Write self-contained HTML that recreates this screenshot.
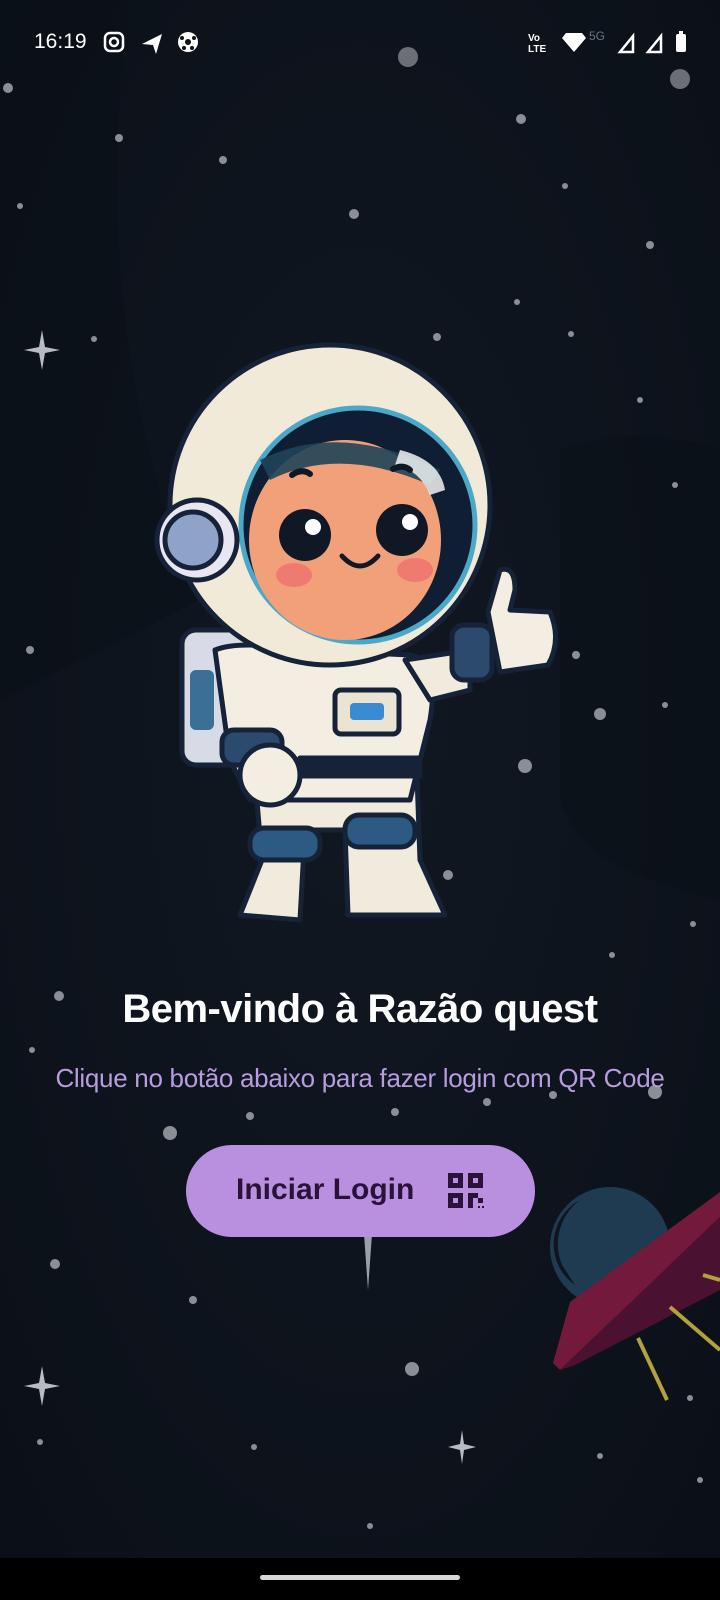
<!DOCTYPE html>
<html><head><meta charset="utf-8">
<style>
html,body{margin:0;padding:0}
body{width:720px;height:1600px;overflow:hidden;background:#0d131b;position:relative;font-family:"Liberation Sans",sans-serif}
.abs{position:absolute}
.title{left:0;width:720px;top:987px;text-align:center;color:#fff;font-weight:bold;font-size:40px;letter-spacing:-0.5px}
.sub{left:0;width:720px;top:1063px;text-align:center;color:#b99be0;font-size:26px;letter-spacing:-0.3px}
.btn{left:186px;top:1145px;width:349px;height:92px;border-radius:46px;background:#b990e0}
.btn span{position:absolute;left:50px;top:28px;font-size:30px;font-weight:bold;color:#2a1238}
</style></head><body>
<svg class="abs" style="left:0;top:0" width="720" height="1600" viewBox="0 0 720 1600">
<defs>
<radialGradient id="bg" cx="0.5" cy="0.45" r="0.7"><stop offset="0" stop-color="#111822"/><stop offset="1" stop-color="#0b1018"/></radialGradient>
</defs>
<rect width="720" height="1600" fill="url(#bg)"/>
<path d="M130 0 C100 200 120 420 200 600 L0 700 L0 0Z" fill="#0a0f16" opacity="0.5"/>
<path d="M560 450 C640 420 720 450 720 450 L720 900 C640 880 580 860 560 800Z" fill="#0a0f16" opacity="0.5"/>
<g fill="#8a8f96">
<circle cx="408" cy="57" r="10" fill="#6c7076"/><circle cx="680" cy="79" r="10" fill="#6c7076"/><circle cx="8" cy="88" r="5"/>
<circle cx="119" cy="138" r="4"/><circle cx="223" cy="160" r="4"/><circle cx="354" cy="214" r="5"/><circle cx="521" cy="119" r="5"/>
<circle cx="565" cy="186" r="3"/><circle cx="650" cy="245" r="4"/><circle cx="20" cy="206" r="3"/><circle cx="437" cy="337" r="4"/>
<circle cx="517" cy="302" r="3"/><circle cx="571" cy="334" r="3"/><circle cx="640" cy="400" r="3"/><circle cx="94" cy="339" r="3"/>
<circle cx="675" cy="485" r="3"/><circle cx="30" cy="650" r="4"/><circle cx="576" cy="655" r="4"/><circle cx="600" cy="714" r="6"/>
<circle cx="525" cy="766" r="7"/><circle cx="665" cy="705" r="3"/><circle cx="448" cy="875" r="5"/><circle cx="612" cy="955" r="3"/>
<circle cx="693" cy="924" r="3"/><circle cx="59" cy="996" r="5"/><circle cx="32" cy="1050" r="3"/><circle cx="170" cy="1133" r="7"/>
<circle cx="250" cy="1116" r="4"/><circle cx="395" cy="1112" r="4"/><circle cx="487" cy="1102" r="4"/><circle cx="553" cy="1095" r="4"/>
<circle cx="655" cy="1092" r="7"/><circle cx="55" cy="1264" r="5"/><circle cx="193" cy="1300" r="4"/><circle cx="412" cy="1369" r="7"/>
<circle cx="600" cy="1456" r="3"/><circle cx="370" cy="1526" r="3"/><circle cx="40" cy="1442" r="3"/><circle cx="690" cy="1398" r="3"/>
<circle cx="700" cy="1480" r="3"/><circle cx="254" cy="1447" r="3"/>
</g>
<g fill="#b8bcc2">
<path d="M42 330 L45 347 L60 350 L45 353 L42 370 L39 353 L24 350 L39 347Z"/>
<path d="M42 1366 L45 1383 L60 1386 L45 1389 L42 1406 L39 1389 L24 1386 L39 1383Z"/>
<path d="M462 1430 L464 1444 L476 1447 L464 1450 L462 1464 L460 1450 L448 1447 L460 1444Z"/>
<path d="M368 1200 L372 1234 L368 1290 L364 1234Z" fill="#9aa0a8"/>
</g>
<!-- UFO -->
<circle cx="610" cy="1247" r="60" fill="#1e3b52"/>
<path d="M562 1265 A55 55 0 0 1 580 1200 A50 50 0 0 0 575 1285Z" fill="#0d1520"/>
<path d="M553 1363 L570 1302 L720 1192 L720 1217 L560 1370Z" fill="#72193c"/>
<path d="M560 1370 L720 1217 L720 1290 L575 1365Z" fill="#4a1230"/>
<g stroke="#b5a040" stroke-width="4"><line x1="670" y1="1307" x2="720" y2="1350"/><line x1="638" y1="1338" x2="667" y2="1400"/><line x1="703" y1="1275" x2="720" y2="1280"/></g>
<!-- astronaut -->
<g stroke="#152238" stroke-width="5" stroke-linejoin="round">
<rect x="182" y="630" width="70" height="135" rx="14" fill="#d7dbe6"/>
<rect x="190" y="670" width="24" height="60" rx="6" fill="#3b6f96" stroke="none"/>
<path d="M250 720 L262 860 L240 915 L300 920 L305 830 L345 830 L348 915 L445 915 L420 860 L415 720Z" fill="#f1ebde"/>
<path d="M215 650 Q240 640 300 650 L410 655 Q440 660 430 720 L410 800 L250 800 L230 760Z" fill="#f4eee2"/>
<path d="M405 660 L470 650 L470 690 L430 700Z" fill="#f1ebde"/>
<rect x="452" y="625" width="40" height="55" rx="12" fill="#2c4a6e"/>
<path d="M488 612 L500 570 Q515 565 515 590 L510 610 L550 612 Q562 640 548 665 L500 672 Z" fill="#f4eee2"/>
<rect x="222" y="730" width="60" height="35" rx="12" fill="#2c4a6e"/>
<circle cx="270" cy="775" r="30" fill="#f4eee2"/>
<rect x="250" y="828" width="70" height="32" rx="14" fill="#2c5a82"/>
<rect x="345" y="815" width="70" height="32" rx="14" fill="#2c5a82"/>
<rect x="335" y="690" width="64" height="44" rx="6" fill="#ece4d2"/>
<rect x="350" y="703" width="34" height="17" rx="4" fill="#3b8bd0" stroke="none"/>
<rect x="300" y="758" width="120" height="18" fill="#152238"/>
<circle cx="330" cy="505" r="160" fill="#f2ead8"/>
<circle cx="358" cy="525" r="117" fill="#0f1e33" stroke="#4aa8c8"/>
<ellipse cx="345" cy="540" rx="96" ry="100" fill="#f2a07a" stroke="none"/>
<circle cx="197" cy="540" r="40" fill="#e8e6f0"/>
<circle cx="193" cy="540" r="28" fill="#8fa2c8"/>
</g>
<path d="M260 460 Q340 420 440 470 L430 485 Q340 445 270 480Z" fill="#1f4458" opacity="0.9"/>
<path d="M400 450 Q440 460 445 490 L430 495 Q420 470 395 465Z" fill="#fff" opacity="0.8"/>
<circle cx="305" cy="535" r="26" fill="#101826"/><circle cx="402" cy="530" r="26" fill="#101826"/>
<circle cx="313" cy="527" r="8" fill="#fff"/><circle cx="410" cy="522" r="8" fill="#fff"/>
<ellipse cx="294" cy="575" rx="18" ry="12" fill="#ee7070" opacity="0.8"/><ellipse cx="415" cy="570" rx="18" ry="12" fill="#ee7070" opacity="0.8"/>
<path d="M342 556 Q360 576 378 556" stroke="#101826" stroke-width="5" fill="none" stroke-linecap="round"/>
<path d="M292 475 Q302 468 310 474" stroke="#101826" stroke-width="6" fill="none" stroke-linecap="round"/>
<path d="M393 469 Q403 464 410 470" stroke="#101826" stroke-width="6" fill="none" stroke-linecap="round"/>
<rect x="0" y="1558" width="720" height="42" fill="#000"/>
<rect x="260" y="1575" width="200" height="5" rx="2.5" fill="#d8d8d8"/>
<!-- status icons -->
<g fill="none" stroke="#fff" stroke-width="2.5"><rect x="105" y="33" width="18" height="18" rx="5"/><circle cx="114" cy="42" r="4"/></g>
<path d="M142 44 L162 34 L156 54 L153 45Z" fill="#fff"/>
<circle cx="188" cy="42" r="10" fill="#fff"/><circle cx="188" cy="42" r="3" fill="#111"/><circle cx="182" cy="38" r="2" fill="#111"/><circle cx="194" cy="38" r="2" fill="#111"/><circle cx="184" cy="48" r="2" fill="#111"/><circle cx="192" cy="48" r="2" fill="#111"/>
<text x="528" y="41" font-size="10" font-weight="bold" fill="#fff" font-family="Liberation Sans">Vo</text>
<text x="528" y="52" font-size="10" font-weight="bold" fill="#fff" font-family="Liberation Sans">LTE</text>
<path d="M562 38 L586 38 L574 52Z M566 33 L582 33 L586 38 L562 38Z" fill="#fff"/>
<text x="589" y="40" font-size="12" fill="#6b7280" font-family="Liberation Sans">5G</text>
<path d="M620 52 L633 36 L633 52Z" fill="none" stroke="#fff" stroke-width="2.5"/>
<path d="M648 52 L661 36 L661 52Z" fill="none" stroke="#fff" stroke-width="2.5"/>
<rect x="676" y="34" width="10" height="18" rx="2" fill="#fff"/><rect x="679" y="31" width="4" height="3" fill="#fff"/>
</svg>
<div class="abs" style="left:34px;top:30px;color:#fff;font-size:21px">16:19</div>
<div class="abs title">Bem-vindo à Razão quest</div>
<div class="abs sub">Clique no botão abaixo para fazer login com QR Code</div>
<div class="abs btn"><span>Iniciar Login</span>
<svg style="position:absolute;left:262px;top:28px" width="36" height="36" viewBox="0 0 36 36" fill="#2a1238">
<path d="M0 0h15v15H0z M5 5v5h5V5z" fill-rule="evenodd"/>
<path d="M20 0h15v15H20z M25 5v5h5V5z" fill-rule="evenodd"/>
<path d="M0 20h15v15H0z M5 25v5h5v-5z" fill-rule="evenodd"/>
<path d="M20 20h5v15h-5z M25 20h5v5h-5z M30 25h5v5h-5z M30 33h2v2h-2z M34 33h2v2h-2z"/>
</svg></div>
</body></html>
